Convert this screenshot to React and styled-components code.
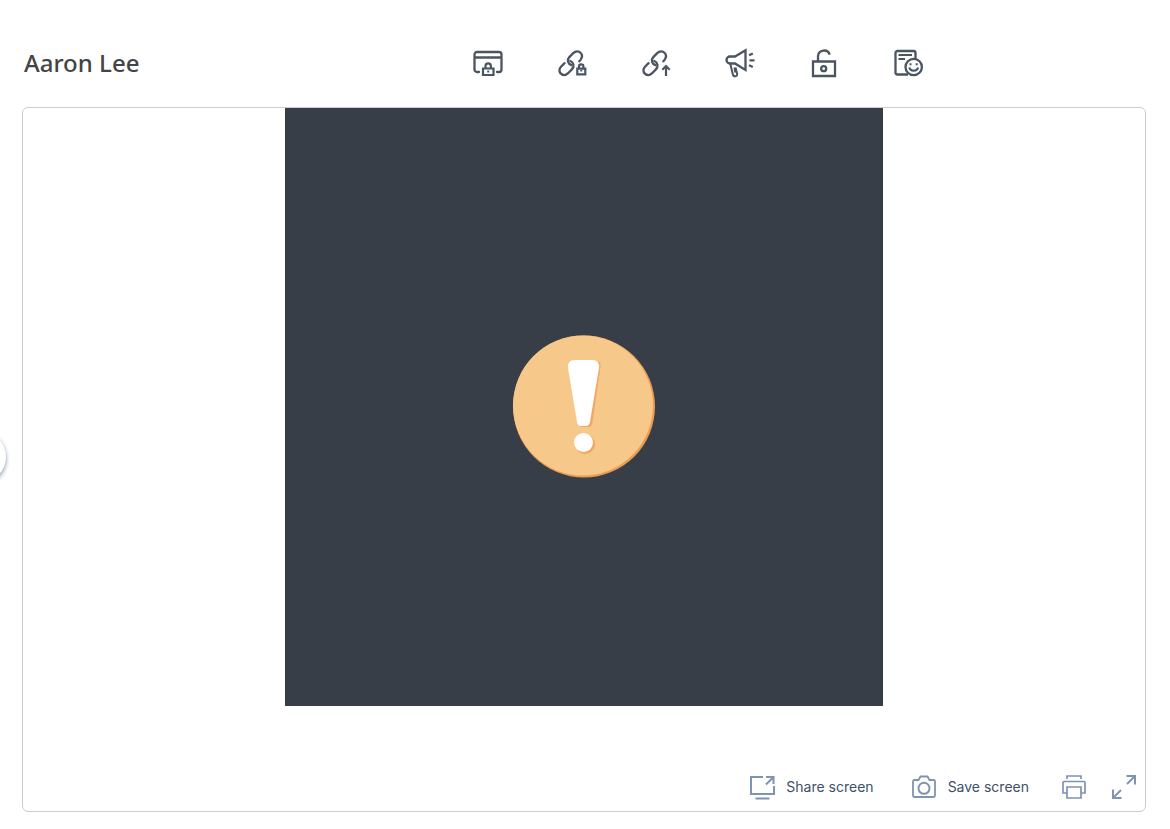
import React from 'react';
import styled, { createGlobalStyle } from 'styled-components';

const GlobalStyle = createGlobalStyle`
	* {
		box-sizing: border-box;
	}
	body {
		margin: 0;
		background-color: #fff;
		font-family: 'Noto Sans', 'Open Sans', sans-serif;
	}
`;

//Page wrapper
const Page = styled.div`
	display: flex;
	flex-direction: column;
	min-height: 100vh;
	padding: 0 24px 17px 22px;
`;

//Top bar with the name and the class tools
const Header = styled.header`
	display: grid;
	grid-template-columns: 448px 1fr;
	align-items: center;
	padding: 47px 0 28px 2px;
`;
const Name = styled.h1`
	margin: 0;
	font-family: 'Noto Sans', 'Open Sans', sans-serif;
	font-size: 24px;
	line-height: 32px;
	font-weight: 500;
	color: #444;
`;
const Tools = styled.nav`
	display: flex;
	gap: 52px;
`;
const IconButton = styled.button`
	display: flex;
	padding: 0;
	border: 0;
	background: none;
	color: ${({ $color }) => $color || '#4a5562'};
	cursor: pointer;
`;
const Icon = styled.svg`
	display: block;
	flex: none;
	width: ${({ $size }) => $size || 32}px;
	height: ${({ $size }) => $size || 32}px;
	fill: none;
	stroke: currentColor;
	stroke-width: 2;
	overflow: visible;
`;

//Screen preview
const Panel = styled.main`
	display: flex;
	flex-direction: column;
	flex: 1;
	border: 1px solid #ccc;
	border-radius: 6px;
`;
const Stage = styled.section`
	display: flex;
	flex: 1;
	justify-content: center;
	align-items: flex-start;
`;
const Screen = styled.div`
	display: flex;
	align-items: center;
	justify-content: center;
	width: 100%;
	max-width: 598px;
	aspect-ratio: 1;
	background-color: #383e48;
`;

//Bottom actions
const Footer = styled.footer`
	display: flex;
	justify-content: flex-end;
	align-items: center;
	height: 48px;
	padding-right: 9px;
`;
const Actions = styled.div`
	display: flex;
	align-items: center;
	gap: ${({ $gap }) => $gap}px;
	margin-right: ${({ $after }) => $after || 0}px;
`;
const LabelButton = styled(IconButton)`
	align-items: center;
	gap: 12px;
	font-family: 'Inter', sans-serif;
	font-size: 14px;
	line-height: 20px;
`;
const Label = styled.span`
	color: #40506a;
`;

//Drawer handle at the left edge of the window
const DrawerHandle = styled.button`
	position: fixed;
	top: 55%;
	left: -46px;
	width: 52px;
	height: 52px;
	margin-top: -25px;
	padding: 0;
	border: 0;
	border-radius: 50%;
	background-color: #fff;
	box-shadow: 0 2px 4px rgba(50, 80, 120, 0.6);
	cursor: pointer;
`;

const Chain = () => (
	<g strokeWidth='2.3' strokeLinecap='round'>
		<path d='M15.500 18.200c-3.700-1.400-4.900-5.200-2.200-8.100l3.900-4c2.400-2.200 5.400-2.300 7.300-.3 1.900 1.900 1.900 4.700 0 7.100l-1.200 1.400' />
		<path d='M8.600 16.200l-3.400 3.300c-2.300 2.400-2.300 5.200-.3 7.100s4.900 1.800 7.200-.4l3.800-3.800c2.700-2.900 1.900-7-1.600-8.400' />
	</g>
);

const BlockScreenIcon = () => (
	<Icon viewBox='0 0 32 32'>
		<path d='M7 25H5a2.500 2.500 0 0 1-2.500-2.500V7.500A2.500 2.500 0 0 1 5 5h22a2.500 2.500 0 0 1 2.500 2.500v15A2.500 2.500 0 0 1 27 25h-2M2.500 10.500h27' strokeWidth='2.300' strokeLinecap='round' />
		<path d='M11 21.500h10.500v6.500H11zM13.500 21.500v-2.500a2.700 2.700 0 0 1 5.400 0v2.500' strokeWidth='2.200' />
		<path d='M16.200 23.500v2' />
	</Icon>
);
const LinkLockIcon = () => (
	<Icon viewBox='0 0 32 32'>
		<Chain />
		<path d='M21.300 21.700h8v5.700h-8zM23 21V19.500a2.200 2.200 0 0 1 4.400 0V21' strokeWidth='2.200' />
		<path d='M25.300 23v1.500' />
	</Icon>
);
const LinkUpIcon = () => (
	<Icon viewBox='0 0 32 32'>
		<Chain />
		<path d='M26 29V19.500M22.300 22.700l3.700-3.700 3.700 3.700' strokeWidth='2.200' />
	</Icon>
);
const MegaphoneIcon = () => (
	<Icon viewBox='0 0 32 32'>
		<path d='M6 9.500h5L21.500 3.300v19.700L11 16.500H6a3.500 3.500 0 0 1 0-7z' strokeWidth='2.300' />
		<path d='M6.200 16.500l2.600 10.700c.4 1.700 1.300 2.300 2.600 2.100s2-1.100 1.700-2.700l-1.600-6.100M10.500 20.500l.8 5' />
		<path d='M25 8.200l3.800-1.700M25.500 13.300h5M25 18.300l3.800 1.700' strokeWidth='2.300' />
	</Icon>
);
const UnlockIcon = () => (
	<Icon viewBox='0 0 32 32'>
		<path d='M5 14.500h22v14.500H5z' strokeWidth='2.300' />
		<path d='M10 14V9a6 6 0 0 1 11.700-1.300' strokeWidth='2.300' />
		<circle cx='15.700' cy='21.700' r='2.500' strokeWidth='2.300' />
	</Icon>
);
const ReportIcon = () => (
	<Icon viewBox='0 0 32 32'>
		<path d='M16 27.500H5.500a2 2 0 0 1-2-2V6a2 2 0 0 1 2-2H21.500a2 2 0 0 1 2 2v6' strokeWidth='2.300' />
		<path d='M6.500 8h13.500M6.500 12h6.500' />
		<circle cx='21.700' cy='20' r='8.200' strokeWidth='2.300' />
		<path d='M17.300 20.500a4.500 4.100 0 0 0 8.800 0' />
		<path d='M17.500 17.300h2M23.700 17.300h2' />
	</Icon>
);

const tools = [
	{ label: 'Block screen', Glyph: BlockScreenIcon },
	{ label: 'Lock link', Glyph: LinkLockIcon },
	{ label: 'Open link', Glyph: LinkUpIcon },
	{ label: 'Announcement', Glyph: MegaphoneIcon },
	{ label: 'Unlock', Glyph: UnlockIcon },
	{ label: 'Report', Glyph: ReportIcon },
];

const Warning = () => (
	<svg width='144' height='144' viewBox='0 0 144 144' role='img' aria-label='Warning'>
		<circle cx='72' cy='71.500' r='71' fill='#eb9c53' />
		<circle cx='71' cy='70.500' r='70' fill='#f6c88a' />
		<g fill='#f2a663'>
			<path d='M64 26h20q5 0 4.500 6l-8 55q-1 5-4 5h-6q-4 0-5-5L57 32z' />
			<circle cx='73' cy='109' r='10' />
		</g>
		<g fill='#fff'>
			<path d='M63 25h17q8 0 7 8l-9 54q-.8 4-4 4h-5q-3.500 0-4-4L56 33q-1-8 7-8z' />
			<circle cx='71.500' cy='107.500' r='9.500' />
		</g>
	</svg>
);

const slate = '#7f93b2';

const App = () => {
	return (
		<Page>
			<GlobalStyle />
			<DrawerHandle aria-label='Open drawer' />
			<Header>
				<Name>Aaron Lee</Name>
				<Tools>
					{tools.map(({ label, Glyph }) => (
						<IconButton key={label} aria-label={label}>
							<Glyph />
						</IconButton>
					))}
				</Tools>
			</Header>
			<Panel>
				<Stage>
					<Screen>
						<Warning />
					</Screen>
				</Stage>
				<Footer>
					<Actions $gap={38} $after={33}>
						<LabelButton $color={slate}>
							<Icon viewBox='0 0 24 24' $size={24}>
								<path d='M13 2H1v17h23v-8' />
								<path d='M16 9.500l7-7M16 2h7.500v7M5.500 23.500h14' />
							</Icon>
							<Label>Share screen</Label>
						</LabelButton>
						<LabelButton $color={slate}>
							<Icon viewBox='0 0 24 24' $size={24}>
								<path d='M2.500 5H6.500l2-3.500h7l2 3.500h4a1.500 1.500 0 0 1 1.500 1.500v14a1.500 1.500 0 0 1-1.500 1.500h-19A1.500 1.500 0 0 1 1 20.500v-14A1.500 1.500 0 0 1 2.500 5z' strokeWidth='1.800' />
								<circle cx='12' cy='13.300' r='5.500' />
							</Icon>
							<Label>Save screen</Label>
						</LabelButton>
					</Actions>
					<Actions $gap={26}>
						<IconButton $color={slate} aria-label='Print'>
							<Icon viewBox='0 0 24 24' $size={24}>
								<path d='M5 4V1h14v3M5 18H1V7.500a1 1 0 0 1 1-1h20a1 1 0 0 1 1 1V18h-4M5 12h14v11H5z' strokeWidth='1.700' />
							</Icon>
						</IconButton>
						<IconButton $color={slate} aria-label='Full screen'>
							<Icon viewBox='0 0 24 24' $size={24}>
								<path d='M14.500 1h8.500v8.500M23 1l-8 8M1 14.500v8.500h8.500M1 23l8-8' />
							</Icon>
						</IconButton>
					</Actions>
				</Footer>
			</Panel>
		</Page>
	);
};

export default App;
